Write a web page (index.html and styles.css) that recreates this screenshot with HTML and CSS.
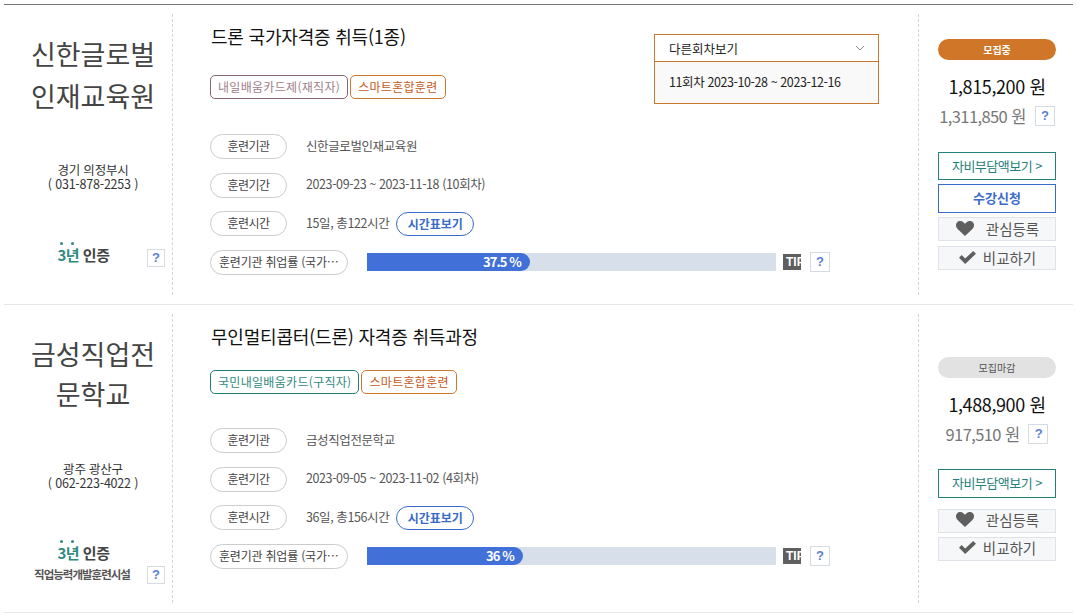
FILE: index.html
```html
<!DOCTYPE html>
<html lang="ko">
<head>
    <meta charset="UTF-8">
    <meta name="viewport" content="width=device-width, initial-scale=1.0">
    <title>훈련과정 목록</title>
    <link rel="stylesheet" href="styles.css">
</head>
<body>

    <div class="course-list">

        <!-- 첫번째 과정 -->
        <div class="course course-first">
            <div class="org">
                <h2 class="org-name">신한글로벌<br>인재교육원</h2>
                <p class="org-addr">경기 의정부시<br>( 031-878-2253 )</p>
                <div class="cert">
                    <div class="cert-logo"><span class="cert-year">3년</span> 인증</div>
                    <span class="help cert-help">?</span>
                </div>
            </div>

            <div class="info">
                <h3 class="info-title">드론 국가자격증 취득(1종)</h3>

                <div class="other-round">
                    <div class="other-round-head">
                        <span>다른회차보기</span>
                        <svg class="chevron" width="10" height="6" viewBox="0 0 10 6"><path d="M1 1l4 4 4-4" fill="none" stroke="#888" stroke-width="1"/></svg>
                    </div>
                    <div class="other-round-body">11회차 2023-10-28 ~ 2023-12-16</div>
                </div>

                <div class="tags">
                    <span class="tag tag-plum">내일배움카드제(재직자)</span>
                    <span class="tag tag-orange">스마트혼합훈련</span>
                </div>

                <div class="rows">
                    <div class="row"><span class="pill">훈련기관</span><span class="row-value">신한글로벌인재교육원</span></div>
                    <div class="row"><span class="pill">훈련기간</span><span class="row-value">2023-09-23 ~ 2023-11-18 (10회차)</span></div>
                    <div class="row"><span class="pill">훈련시간</span><span class="row-value">15일, 총122시간</span><span class="time-btn">시간표보기</span></div>
                    <div class="row">
                        <span class="pill pill-wide">훈련기관 취업률 (국가인증 기준)</span>
                        <div class="bar"><div class="bar-fill" style="width: 163px">37.5 %</div></div>
                        <span class="tip">TIP</span>
                        <span class="help">?</span>
                    </div>
                </div>
            </div>

            <div class="side">
                <div class="badge badge-open">모집중</div>
                <div class="price">1,815,200 원</div>
                <div class="price-sub">
                    <span>1,311,850 원</span>
                    <span class="help">?</span>
                </div>
                <a class="btn btn-teal" href="#">자비부담액보기 &gt;</a>
                <a class="btn btn-blue" href="#">수강신청</a>
                <a class="btn btn-gray" href="#">
                    <svg class="heart" width="18" height="15" viewBox="0 0 18 15"><path d="M9 15L1.6 7.9C-.5 5.8-.5 3.1 1 1.5 2.7-.4 5.6-.4 7.4 1.2L9 2.8l1.6-1.6c1.8-1.6 4.7-1.6 6.4.3 1.5 1.6 1.5 4.3-.6 6.4z" fill="#5f5f5f"/></svg>
                    <span class="btn-label-heart">관심등록</span>
                </a>
                <a class="btn btn-gray btn-compare" href="#">
                    <svg class="check" width="17" height="13" viewBox="0 0 17 13"><path d="M0 6.8l2.7-2.7 3.5 3.4L14.2 0 17 2.7 6.2 13z" fill="#5f5f5f"/></svg>
                    <span>비교하기</span>
                </a>
            </div>
        </div>

        <!-- 두번째 과정 -->
        <div class="course course-second">
            <div class="org">
                <h2 class="org-name">금성직업전<br>문학교</h2>
                <p class="org-addr">광주 광산구<br>( 062-223-4022 )</p>
                <div class="cert">
                    <div class="cert-logo"><span class="cert-year">3년</span> 인증</div>
                    <div class="cert-sub">직업능력개발훈련시설</div>
                    <span class="help cert-help">?</span>
                </div>
            </div>

            <div class="info">
                <h3 class="info-title">무인멀티콥터(드론) 자격증 취득과정</h3>

                <div class="tags">
                    <span class="tag tag-teal">국민내일배움카드(구직자)</span>
                    <span class="tag tag-orange">스마트혼합훈련</span>
                </div>

                <div class="rows">
                    <div class="row"><span class="pill">훈련기관</span><span class="row-value">금성직업전문학교</span></div>
                    <div class="row"><span class="pill">훈련기간</span><span class="row-value">2023-09-05 ~ 2023-11-02 (4회차)</span></div>
                    <div class="row"><span class="pill">훈련시간</span><span class="row-value">36일, 총156시간</span><span class="time-btn">시간표보기</span></div>
                    <div class="row">
                        <span class="pill pill-wide">훈련기관 취업률 (국가인증 기준)</span>
                        <div class="bar"><div class="bar-fill" style="width: 156px">36 %</div></div>
                        <span class="tip">TIP</span>
                        <span class="help">?</span>
                    </div>
                </div>
            </div>

            <div class="side">
                <div class="badge badge-closed">모집마감</div>
                <div class="price">1,488,900 원</div>
                <div class="price-sub">
                    <span>917,510 원</span>
                    <span class="help">?</span>
                </div>
                <a class="btn btn-teal btn-last" href="#">자비부담액보기 &gt;</a>
                <a class="btn btn-gray" href="#">
                    <svg class="heart" width="18" height="15" viewBox="0 0 18 15"><path d="M9 15L1.6 7.9C-.5 5.8-.5 3.1 1 1.5 2.7-.4 5.6-.4 7.4 1.2L9 2.8l1.6-1.6c1.8-1.6 4.7-1.6 6.4.3 1.5 1.6 1.5 4.3-.6 6.4z" fill="#5f5f5f"/></svg>
                    <span class="btn-label-heart">관심등록</span>
                </a>
                <a class="btn btn-gray" href="#">
                    <svg class="check" width="17" height="13" viewBox="0 0 17 13"><path d="M0 6.8l2.7-2.7 3.5 3.4L14.2 0 17 2.7 6.2 13z" fill="#5f5f5f"/></svg>
                    <span>비교하기</span>
                </a>
            </div>
        </div>

    </div>

</body>
</html>
```

FILE: styles.css
```css
body {
    font-family: "Noto Sans CJK KR", "Noto Sans", sans-serif;
    background-color: #fff;
    color: #333;
    margin: 0;
    padding: 4px 4px 0;
}

a {
    text-decoration: none;
}

.course-list {
    border-top: 1px solid #777;
}

.course {
    display: flex;
    padding: 9px 0;
    border-bottom: 1px solid #e6e6e6;
    box-sizing: border-box;
}

.course-first {
    height: 300px;
}

.course-second {
    height: 308px;
}

/* 왼쪽 기관 정보 */
.org {
    width: 169px;
    border-right: 1px dashed #d4d4d4;
    box-sizing: border-box;
    text-align: center;
    padding-left: 10px;
    display: flex;
    flex-direction: column;
}

.org-name {
    margin: 19px 0 0;
    font-size: 27px;
    line-height: 42px;
    font-weight: 400;
    color: #444;
}

.course-second .org-name {
    margin-top: 20px;
    line-height: 40px;
}

.org-addr {
    margin: 46px 0 0;
    font-size: 12.5px;
    line-height: 14px;
    letter-spacing: -0.2px;
    color: #333;
}

.course-second .org-addr {
    margin-top: 48px;
}

.cert {
    position: relative;
    margin-top: 54px;
    padding-right: 19px;
}

.course-second .cert {
    margin-top: 53px;
}

.cert-logo {
    font-size: 15px;
    line-height: 20px;
    font-weight: 700;
    letter-spacing: -0.5px;
    color: #444;
}

.cert-year {
    position: relative;
    color: #2f8a80;
}

.cert-year::before {
    content: "";
    position: absolute;
    left: 2px;
    top: -2px;
    width: 3px;
    height: 3px;
    border-radius: 50%;
    background-color: #2f8a80;
    box-shadow: 11px 0 0 #2f8a80;
}

.cert-sub {
    margin: 1px 0 0 -3px;
    font-size: 11.5px;
    line-height: 20px;
    font-weight: 700;
    letter-spacing: -1px;
    color: #555;
    white-space: nowrap;
}

.help {
    display: inline-block;
    flex: none;
    width: 18px;
    height: 18px;
    line-height: 18px;
    border: 1px solid #d5dbe3;
    text-align: center;
    font-family: "Liberation Sans", sans-serif;
    font-size: 13px;
    font-weight: 700;
    color: #5b80d6;
    background-color: #fff;
}

.cert-help {
    position: absolute;
    right: 7px;
    bottom: -2px;
    width: 16px;
    height: 16px;
    line-height: 16px;
}

.course-second .cert-help {
    bottom: 0;
}

/* 가운데 과정 정보 */
.info {
    flex: 1;
    position: relative;
    padding: 8px 0 0 37px;
}

.info-title {
    margin: 0 0 0 1px;
    font-size: 18px;
    line-height: 28px;
    font-weight: 400;
    letter-spacing: -0.2px;
    color: #111;
}

.tags {
    display: flex;
    gap: 2px;
    margin-top: 20px;
}

.course-first .tags {
    margin-top: 25px;
}

.tag {
    display: block;
    height: 24px;
    line-height: 22px;
    box-sizing: border-box;
    padding: 0 7px;
    border: 1px solid;
    border-radius: 5px;
    font-size: 12px;
    letter-spacing: 0.3px;
    white-space: nowrap;
}

.tag-plum {
    border-color: #8a6474;
    color: #a0808c;
}

.tag-orange {
    border-color: #d2762c;
    color: #c65a1c;
}

.tag-teal {
    border-color: #1f7f78;
    color: #2f8a80;
}

.rows {
    display: flex;
    flex-direction: column;
    gap: 13.5px;
    margin-top: 34px;
}

.course-first .rows {
    margin-top: 35px;
}

.row {
    display: flex;
    align-items: center;
    height: 25px;
}

.pill {
    flex: none;
    width: 77px;
    height: 25px;
    line-height: 22px;
    box-sizing: border-box;
    border: 1px solid #ccc;
    border-radius: 13px;
    text-align: center;
    font-size: 12px;
    letter-spacing: -0.5px;
    color: #444;
    background-color: #fff;
}

.pill-wide {
    width: 138px;
    padding: 0 8px;
    overflow: hidden;
    white-space: nowrap;
    text-overflow: ellipsis;
    letter-spacing: -0.2px;
}

.row-value {
    margin: -3px 0 0 19px;
    font-size: 12.5px;
    letter-spacing: -0.4px;
    color: #555;
}

.time-btn {
    margin-left: 7px;
    width: 78px;
    height: 24px;
    line-height: 21px;
    box-sizing: border-box;
    border: 1px solid #3a6bc9;
    border-radius: 12px;
    text-align: center;
    font-size: 12px;
    font-weight: 700;
    color: #3a6bc9;
}

.bar {
    width: 409px;
    height: 18px;
    margin-left: 19px;
    background-color: #d7dfeb;
}

.bar-fill {
    height: 18px;
    line-height: 18px;
    box-sizing: border-box;
    padding-right: 9px;
    text-align: right;
    border-radius: 0 9px 9px 0;
    background-color: #4070d8;
    color: #fff;
    font-size: 13px;
    font-weight: 700;
    letter-spacing: -0.9px;
    white-space: nowrap;
}

.tip {
    width: 18px;
    height: 16px;
    margin: 0 9px 0 7px;
    overflow: hidden;
    background-color: #5f5f5f;
    color: #fff;
    padding-left: 3px;
    box-sizing: border-box;
    font-family: "Liberation Sans", sans-serif;
    font-size: 12px;
    line-height: 16px;
    font-weight: 700;
    white-space: nowrap;
}

/* 다른회차 드롭다운 */
.other-round {
    position: absolute;
    top: 20px;
    left: 481px;
    width: 225px;
    box-sizing: border-box;
    border: 1px solid #c8792c;
    background-color: #f9f9f9;
}

.other-round-head {
    display: flex;
    justify-content: space-between;
    align-items: center;
    height: 26px;
    padding: 0 13px 0 14px;
    border-bottom: 1px solid #c8792c;
    background-color: #fff;
    font-size: 12.5px;
    color: #222;
}

.other-round-body {
    height: 41px;
    line-height: 40px;
    padding-left: 14px;
    font-size: 12.5px;
    letter-spacing: -0.4px;
    color: #222;
}

/* 오른쪽 가격, 버튼 */
.side {
    width: 155px;
    border-left: 1px dashed #d4d4d4;
    box-sizing: border-box;
    padding: 0 17px 0 19px;
    display: flex;
    flex-direction: column;
    justify-content: center;
}

.badge {
    height: 21px;
    line-height: 21px;
    border-radius: 11px;
    text-align: center;
    font-size: 10px;
}

.badge-open {
    background-color: #cf7628;
    color: #fff;
    font-weight: 700;
}

.badge-closed {
    background-color: #e2e2e2;
    color: #555;
}

.price {
    margin-top: 14px;
    height: 24px;
    line-height: 24px;
    text-align: center;
    font-size: 18px;
    letter-spacing: -0.4px;
    color: #111;
    white-space: nowrap;
}

.price-sub {
    margin-top: 6px;
    height: 24px;
    display: flex;
    align-items: center;
    justify-content: center;
    gap: 9px;
    font-size: 16.5px;
    letter-spacing: -0.6px;
    color: #777;
    white-space: nowrap;
}

.btn {
    display: flex;
    align-items: center;
    justify-content: center;
    box-sizing: border-box;
    width: 118px;
    font-size: 13px;
    white-space: nowrap;
}

.btn-teal {
    height: 28px;
    margin-top: 24px;
    border: 1px solid #24807a;
    color: #24807a;
    letter-spacing: -0.5px;
    padding-bottom: 2px;
}

.btn-last {
    height: 29px;
    margin-top: 23px;
    margin-bottom: 7px;
}

.btn-blue {
    height: 29px;
    margin-top: 4px;
    border: 1px solid #3a6bc9;
    color: #3a6bc9;
    font-weight: 700;
    padding-bottom: 2px;
}

.btn-gray {
    height: 24px;
    margin-top: 4px;
    border: 1px solid #dfe3e8;
    background-color: #f6f7f8;
    color: #555;
    font-size: 14.5px;
    gap: 7px;
    padding: 0 0 2px 1px;
}

.btn-compare {
    margin-top: 5px;
}

.btn-label-heart {
    margin-left: 5px;
}
```
